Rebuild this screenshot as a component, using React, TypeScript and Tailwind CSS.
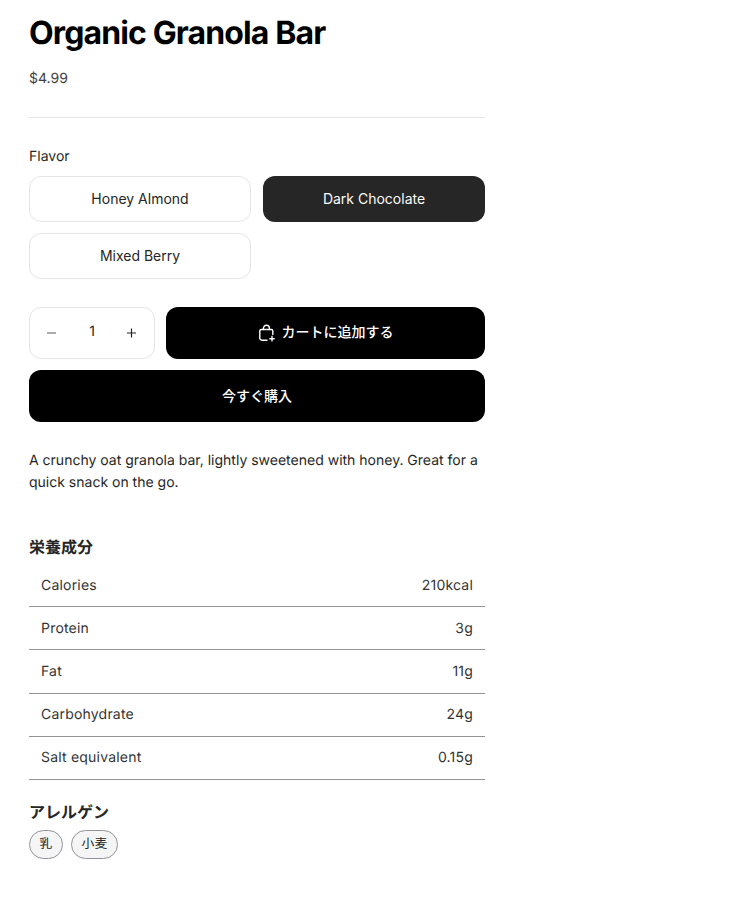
const nutrition = [
  { label: 'Calories', value: '210kcal' },
  { label: 'Protein', value: '3g' },
  { label: 'Fat', value: '11g' },
  { label: 'Carbohydrate', value: '24g' },
  { label: 'Salt equivalent', value: '0.15g' },
];

const font = "font-['Inter','Noto_Sans_CJK_JP',sans-serif]";

function BagPlus() {
  return (
    <svg width="18" height="18" viewBox="0 0 18 18" fill="none" stroke="currentColor" strokeWidth="1.4" strokeLinecap="round" strokeLinejoin="round">
      <path d="M9 16.2H3.8A2 2 0 0 1 1.8 14.2V7A1.5 1.5 0 0 1 3.3 5.5h10A1.5 1.5 0 0 1 14.8 7V10.5" />
      <path d="M5.4 5.5V4.3A3 3 0 0 1 8.4 1.3A3 3 0 0 1 11.4 4.3v1.2" />
      <path d="M14 12.5v4.4M11.8 14.7h4.4" />
    </svg>
  );
}

export default function App() {
  return (
    <div className={`${font} [text-rendering:geometricPrecision] bg-white min-h-[920px] pl-[29px] text-[#262626]`}>
      <div className="w-[456px]">
        <h1 className="text-[32px] leading-[36px] font-bold tracking-[-0.88px] [font-optical-sizing:none] text-black pt-[15px]">Organic Granola Bar</h1>
        <p className="mt-[18px] text-sm leading-5 text-[#404040]">$4.99</p>
        <div className="mt-[28px] border-t border-[#e5e5e5]" />

        <p className="mt-[29px] text-sm leading-5">Flavor</p>
        <div className="mt-[9px] grid grid-cols-2 gap-x-3 gap-y-[11px]">
          <button className="h-[46px] rounded-xl border border-[#e5e5e5] bg-white text-sm">Honey Almond</button>
          <button className="h-[46px] rounded-xl bg-[#262626] text-sm text-[#fafafa]">Dark Chocolate</button>
          <button className="h-[46px] rounded-xl border border-[#e5e5e5] bg-white text-sm">Mixed Berry</button>
        </div>

        <div className="mt-7 flex gap-[11px]">
          <div className="flex h-[52px] w-[126px] items-center justify-between rounded-xl border border-[#e5e5e5] px-[15px] text-sm">
            <svg width="14" height="14" viewBox="0 0 14 14" fill="none" stroke="#737373" strokeWidth="1.2"><path d="M2 7h9" /></svg>
            <span className="-mt-0.5">1</span>
            <svg width="14" height="14" viewBox="0 0 14 14" fill="none" stroke="#262626" strokeWidth="1.2"><path d="M2 7h9M6.5 2.5v9" /></svg>
          </div>
          <button className="flex h-[52px] flex-1 items-center justify-center gap-[6px] rounded-xl bg-black text-sm font-medium text-white">
            <BagPlus />
            <span className="-mt-0.5">カートに追加する</span>
          </button>
        </div>
        <button className="mt-[11px] h-[52px] w-full rounded-xl bg-black text-sm font-medium text-white">今すぐ購入</button>

        <p className="mt-[28px] text-sm leading-[22px]">A crunchy oat granola bar, lightly sweetened with honey. Great for a quick snack on the go.</p>

        <h2 className="mt-[41px] text-base leading-6 font-bold">栄養成分</h2>
        <div className="mt-[5px]">
          {nutrition.map((row) => (
            <div key={row.label} className="flex h-[43.2px] items-center justify-between border-b border-[#909399] px-3 pt-px text-sm tracking-[0.2px] text-[#333333]">
              <span>{row.label}</span>
              <span>{row.value}</span>
            </div>
          ))}
        </div>

        <h2 className="mt-5 text-base leading-6 font-bold">アレルゲン</h2>
        <div className="mt-[6px] flex gap-2">
          <span className="flex h-[29px] items-center rounded-full border border-[#909399] bg-[#f5f5f5] px-[9.6px] text-[12.8px]">乳</span>
          <span className="flex h-[29px] items-center rounded-full border border-[#909399] bg-[#f5f5f5] px-[9.6px] text-[12.8px]">小麦</span>
        </div>
      </div>
    </div>
  );
}
